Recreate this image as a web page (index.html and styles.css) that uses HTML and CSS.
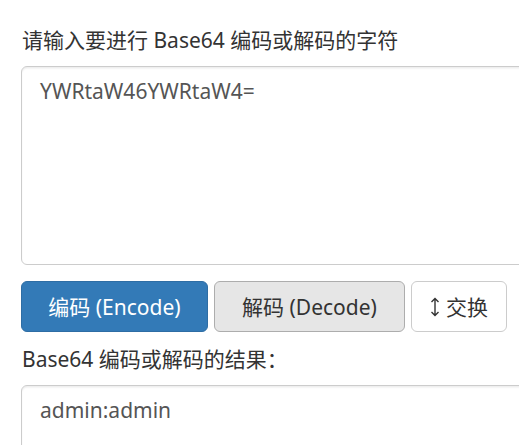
FILE: index.html
```html
<!DOCTYPE html>
<html lang="zh-CN">
<head>
<meta charset="utf-8">
<title>Base64</title>
<link rel="stylesheet" href="styles.css">
</head>
<body>
<div class="page">
  <label class="field-label" for="src">请输入要进行 Base64 编码或解码的字符</label>
  <textarea id="src" class="box box-input">YWRtaW46YWRtaW4=</textarea>
  <div class="actions">
    <button class="btn btn-primary">编码 (Encode)</button>
    <button class="btn btn-active">解码 (Decode)</button>
    <button class="btn btn-default"><svg class="icon" width="10" height="20" viewBox="0 0 10 20"><path d="M5 1.5V18.5M1.5 5L5 1.5L8.5 5M1.5 15L5 18.5L8.5 15" fill="none" stroke="#333" stroke-width="1.4"/></svg> 交换</button>
  </div>
  <label class="field-label" for="dst">Base64 编码或解码的结果：</label>
  <textarea id="dst" class="box box-output">admin:admin</textarea>
</div>
</body>
</html>
```

FILE: styles.css
```css
html, body {
  margin: 0;
  padding: 0;
  overflow: hidden;
  background: #fff;
}
body {
  font-family: "Noto Sans", "Noto Sans CJK SC", sans-serif;
  font-size: 21px;
  line-height: 30px;
  color: #333;
}
.page {
  padding: 25px 0 0 21px;
  display: flex;
  flex-direction: column;
  align-items: flex-start;
}
.field-label {
  display: block;
  height: 30px;
  margin: 0 0 11px 1px;
  font-weight: normal;
}
.box {
  display: block;
  box-sizing: border-box;
  width: 640px;
  margin: 0;
  padding: 9px 18px;
  border: 1.5px solid #ccc;
  border-radius: 6px;
  box-shadow: inset 0 1.5px 1.5px rgba(0,0,0,.075);
  font-family: inherit;
  font-size: 21px;
  line-height: 30px;
  color: #555;
  background: #fff;
  resize: none;
  overflow: hidden;
}
.box-input {
  height: 199px;
}
.box-output {
  height: 120px;
}
.actions {
  display: flex;
  gap: 6px;
  margin: 16px 0 12px;
}
.btn {
  box-sizing: border-box;
  height: 51px;
  padding: 9px 18px;
  border: 1.5px solid #ccc;
  border-radius: 6px;
  font-family: inherit;
  font-size: 21px;
  line-height: 30px;
  color: #333;
  background: #fff;
  display: flex;
  align-items: center;
  white-space: nowrap;
}
.btn-primary {
  width: 187px;
  justify-content: center;
  color: #fff;
  background: #337ab7;
  border-color: #2e6da4;
}
.btn-active {
  width: 191px;
  justify-content: center;
  background: #e6e6e6;
  border-color: #adadad;
}
.btn-default {
  width: 96px;
  justify-content: center;
  gap: 6px;
}
.icon {
  display: block;
}
```
